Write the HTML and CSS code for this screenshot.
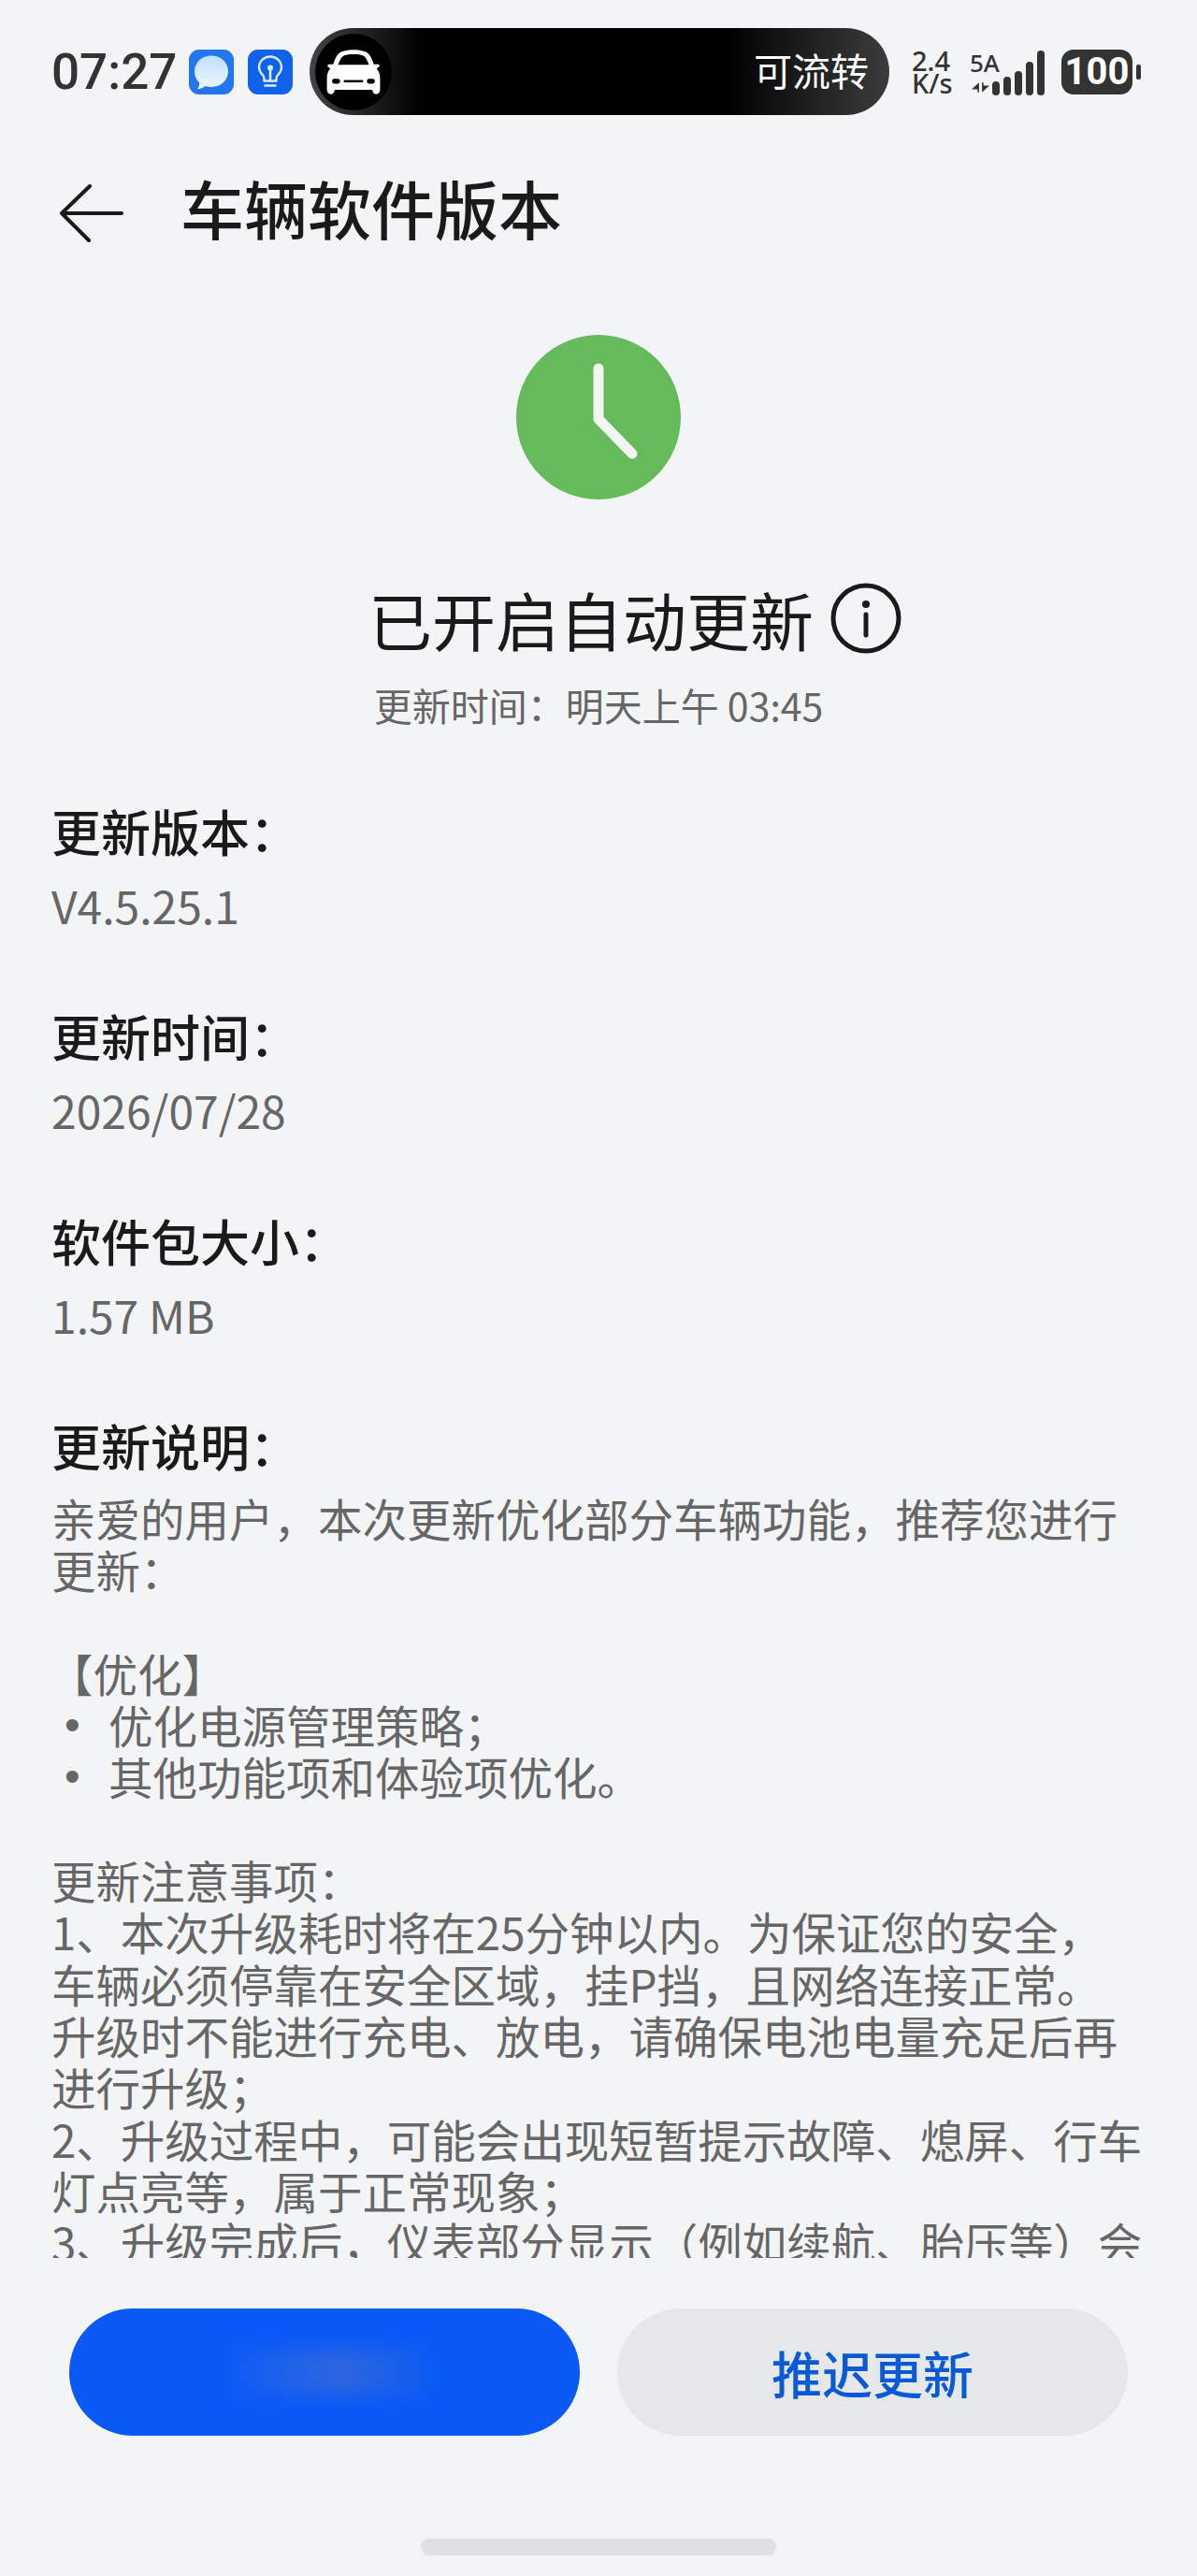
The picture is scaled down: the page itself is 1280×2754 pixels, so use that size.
FILE: index.html
```html
<!DOCTYPE html>
<html lang="zh-CN">
<head>
    <meta charset="UTF-8">
    <meta name="viewport" content="width=device-width, initial-scale=1.0">
    <title>车辆软件版本</title>
    <link rel="stylesheet" href="styles.css">
</head>
<body>
    <div class="phone">
        <div class="status-bar">
            <span class="clock-time">07:27</span>
            <svg class="app-icon" viewBox="0 0 48 48">
                <defs>
                    <linearGradient id="bubble" x1="0" y1="0" x2="0" y2="1">
                        <stop offset="0" stop-color="#bfe0fb"/>
                        <stop offset="1" stop-color="#eef7fe"/>
                    </linearGradient>
                </defs>
                <rect width="48" height="48" rx="11" fill="#2276ee"/>
                <path d="M24 6.500c10.200 0 18 7.400 18 16.800s-7.800 16.700-18 16.700c-2.400 0-4.600-.4-6.600-1.100-2.100 1.900-5.200 3.200-8.400 3.300 1.500-1.700 2.300-3.900 2.300-6.500C7.800 32.500 6 28.300 6 23.300 6 13.900 13.800 6.500 24 6.500z" fill="url(#bubble)"/>
            </svg>
            <svg class="app-icon bulb-icon" viewBox="0 0 48 48">
                <rect width="48" height="48" rx="11" fill="#0f62ea"/>
                <path d="M17.500 33.500v-2.800c0-1.500-.8-2.700-1.900-3.900-2.100-2.200-3.600-4.600-3.600-7.800C12 12.400 17.300 7.500 24 7.500s12 4.900 12 11.500c0 3.200-1.500 5.600-3.600 7.800-1.100 1.200-1.900 2.400-1.900 3.900v2.800z" fill="none" stroke="#dbeafe" stroke-width="2.400" stroke-linejoin="round"/>
                <path d="M18.500 38.500h11M24 22v11" fill="none" stroke="#dbeafe" stroke-width="2.600" stroke-linecap="round"/>
                <circle cx="24" cy="19.500" r="3" fill="#dbeafe"/>
            </svg>
            <div class="island">
                <span class="island-car">
                    <svg viewBox="0 0 60 48" class="car-icon">
                        <path d="M14 5.500C17 2.500 23 1 30 1s13 1.500 16 4.500c2 2 3.500 6 5 10.500h4.500c1.200 0 1.800 1.500 1 2.500L54 20.500c2.300 2.500 3.500 6 3.500 10V42c0 3-1.500 5-4 5s-4-2-4-4.500H10.500C10.500 45 9 47 6.500 47s-4-2-4-5V30.500c0-4.500 1.200-8 3.500-10l-2.500-2c-.8-1-.2-2.500 1-2.500H9c1.500-4.500 3-8.500 5-10.500z" fill="#fff"/>
                        <path d="M14 16.500c1.500-4 3-7 4.500-8.500C21 6 25 5.500 30 5.500S39 6 41.500 8c1.500 1.500 3 4.500 4.500 8.500z" fill="#000"/>
                        <path d="M20 33.500h20" stroke="#000" stroke-width="2.400"/>
                        <rect x="8" y="31" width="8" height="5" rx="2" fill="#000"/>
                        <rect x="44" y="31" width="8" height="5" rx="2" fill="#000"/>
                    </svg>
                </span>
                <span class="island-label">可流转</span>
            </div>
            <div class="net-speed"><span>2.4</span><span>K/s</span></div>
            <div class="signal-wrap">
                <span class="signal-type">5A</span>
                <svg class="signal-arrows" viewBox="0 0 18 10">
                    <path d="M7.500 0v10H6V7H0zM10.500 10V0H12v3h6z" fill="#333"/>
                </svg>
            </div>
            <div class="signal-bars">
                <i class="bar-1"></i><i class="bar-2"></i><i class="bar-3"></i><i class="bar-4"></i><i class="bar-5"></i>
            </div>
            <div class="battery"><span class="battery-level">100</span><i class="battery-tip"></i></div>
        </div>

        <header class="title-bar">
            <svg class="back-arrow" viewBox="0 0 70 62">
                <path d="M3 31h64M33 2L3 31l29 29" fill="none" stroke="#1a1a1a" stroke-width="4" stroke-linecap="round" stroke-linejoin="round"/>
            </svg>
            <h1>车辆软件版本</h1>
        </header>

        <div class="update-state">
            <svg class="state-icon" viewBox="0 0 176 176">
                <circle cx="88" cy="88" r="88" fill="#65bb5c"/>
                <path d="M88 36v54l36 37" fill="none" stroke="#f3f6f3" stroke-width="11" stroke-linecap="round" stroke-linejoin="round"/>
            </svg>
            <div class="state-title">
                <span>已开启自动更新</span>
                <svg class="info-icon" viewBox="0 0 76 76">
                    <circle cx="38" cy="38" r="35" fill="none" stroke="#1a1a1a" stroke-width="5"/>
                    <circle cx="38" cy="23" r="4" fill="#1a1a1a"/>
                    <path d="M38 34v22" stroke="#1a1a1a" stroke-width="5" stroke-linecap="round"/>
                </svg>
            </div>
            <p class="state-time">更新时间：明天上午 03:45</p>
        </div>

        <section class="info-block">
            <h2>更新版本：</h2>
            <p class="info-value">V4.5.25.1</p>
        </section>
        <section class="info-block">
            <h2>更新时间：</h2>
            <p class="info-value">2026/07/28</p>
        </section>
        <section class="info-block">
            <h2>软件包大小：</h2>
            <p class="info-value">1.57 MB</p>
        </section>

        <section class="notes">
            <h2>更新说明：</h2>
            <div class="notes-text">
                <p>亲爱的用户，本次更新优化部分车辆功能，推荐您进行</p>
                <p>更新：</p>
                <p class="blank-line"></p>
                <p class="tag-line">【优化】</p>
                <p class="bullet-line"><span class="bullet">•</span>优化电源管理策略；</p>
                <p class="bullet-line"><span class="bullet">•</span>其他功能项和体验项优化。</p>
                <p class="blank-line"></p>
                <p>更新注意事项：</p>
                <p>1、本次升级耗时将在25分钟以内。为保证您的安全，</p>
                <p>车辆必须停靠在安全区域，挂P挡，且网络连接正常。</p>
                <p>升级时不能进行充电、放电，请确保电池电量充足后再</p>
                <p>进行升级；</p>
                <p>2、升级过程中，可能会出现短暂提示故障、熄屏、行车</p>
                <p>灯点亮等，属于正常现象；</p>
                <p>3、升级完成后，仪表部分显示（例如续航、胎压等）会</p>
            </div>
        </section>

        <div class="actions">
            <button class="btn btn-primary"><span class="blurred-label"></span></button>
            <button class="btn btn-secondary">推迟更新</button>
        </div>
        <div class="home-bar"></div>
    </div>
</body>
</html>
```

FILE: styles.css
```css
* {
    box-sizing: border-box;
}
body {
    margin: 0;
    background-color: #f3f4f6;
    font-family: "Noto Sans CJK SC", "Noto Sans", sans-serif;
}
h1, h2, p {
    margin: 0;
    font-weight: 400;
}
.phone {
    width: 1280px;
    height: 2754px;
    overflow: hidden;
    padding-top: 30px;
}

/* status bar */
.status-bar {
    display: flex;
    align-items: center;
    height: 93px;
    padding-left: 55px;
    color: #333;
}
.clock-time {
    width: 147px;
    font-family: Roboto, sans-serif;
    font-size: 53px;
    font-weight: 500;
}
.app-icon {
    width: 48px;
    height: 48px;
    margin-right: 15px;
}
.bulb-icon {
    margin-right: 18px;
}
.island {
    display: flex;
    align-items: center;
    justify-content: space-between;
    width: 620px;
    height: 93px;
    padding: 0 22px 0 6px;
    border-radius: 47px;
    background: linear-gradient(90deg, #444 0, #000 19%, #000 72%, #3b3d3d 100%);
}
.island-car {
    display: flex;
    align-items: center;
    justify-content: center;
    width: 82px;
    height: 82px;
    border-radius: 50%;
    background-color: #000;
}
.car-icon {
    width: 62px;
    height: 50px;
}
.island-label {
    margin-top: -6px;
    color: #fff;
    font-size: 41px;
}
.net-speed {
    display: flex;
    flex-direction: column;
    width: 62px;
    margin-left: 24px;
    font-family: "Noto Sans", sans-serif;
    font-size: 29px;
    font-weight: 500;
    line-height: 24px;
}
.signal-wrap {
    display: flex;
    flex-direction: column;
    width: 36px;
    font-family: "Noto Sans", sans-serif;
    font-size: 26px;
    font-weight: 500;
    line-height: 24px;
}
.signal-arrows {
    width: 19px;
    height: 11px;
    margin: 9px 0 0 2px;
}
.signal-bars {
    display: flex;
    align-items: flex-end;
    gap: 4px;
    height: 50px;
    margin-left: -12px;
}
.signal-bars i {
    width: 8px;
    background-color: #333;
    border-radius: 4px;
}
.bar-1 { height: 15px; }
.bar-2 { height: 20px; }
.bar-3 { height: 26px; }
.bar-4 { height: 36px; }
.bar-5 { height: 48px; }
.battery {
    display: flex;
    align-items: center;
    margin-left: 18px;
}
.battery-level {
    width: 76px;
    height: 48px;
    border-radius: 13px;
    background-color: #333;
    color: #fff;
    font-family: Roboto, sans-serif;
    font-size: 40px;
    font-weight: 700;
    line-height: 48px;
    text-align: center;
}
.battery-tip {
    width: 5px;
    height: 16px;
    margin-left: 4px;
    border-radius: 2px;
    background-color: #333;
}

/* title */
.title-bar {
    display: flex;
    align-items: center;
    height: 70px;
    margin-top: 64px;
    padding-left: 63px;
}
.back-arrow {
    width: 70px;
    height: 62px;
    margin-top: 12px;
}
.title-bar h1 {
    margin-left: 60px;
    color: #1a1a1a;
    font-size: 68px;
    font-weight: 500;
    line-height: 70px;
}

/* update state */
.update-state {
    display: flex;
    flex-direction: column;
    align-items: center;
    margin-top: 101px;
}
.state-icon {
    width: 176px;
    height: 176px;
}
.state-title {
    display: flex;
    align-items: center;
    height: 90px;
    margin-top: 82px;
    padding-left: 78px;
    color: #1a1a1a;
    font-size: 68px;
}
.info-icon {
    width: 76px;
    height: 76px;
    margin-left: 18px;
}
.state-time {
    margin-top: 18px;
    color: #666;
    font-size: 41px;
    line-height: 58px;
}

/* info */
.info-block {
    margin-top: 68px;
    padding-left: 55px;
}
.info-block + .info-block {
    margin-top: 64px;
}
.info-block h2,
.notes h2 {
    color: #1a1a1a;
    font-size: 53px;
    font-weight: 500;
    line-height: 76px;
}
.info-value {
    margin-top: 3px;
    color: #666;
    font-size: 48px;
    line-height: 76px;
}
.notes {
    height: 907px;
    margin-top: 64px;
    padding-left: 55px;
    overflow: hidden;
}
.notes-text {
    margin-top: 12px;
    color: #666;
    font-size: 47.500px;
    line-height: 55.300px;
    white-space: nowrap;
}
.blank-line {
    height: 55.300px;
}
.tag-line {
    margin-left: -3px;
}
.bullet-line {
    display: flex;
}
.bullet {
    width: 61px;
    padding-left: 14px;
    font-family: "Liberation Sans", sans-serif;
}

/* buttons */
.actions {
    display: flex;
    gap: 40px;
    margin-top: 54px;
    padding-left: 74px;
}
.btn {
    width: 546px;
    height: 136px;
    border: none;
    border-radius: 68px;
    font-family: inherit;
    font-size: 54px;
    font-weight: 500;
}
.btn-primary {
    display: flex;
    align-items: center;
    justify-content: center;
    background-color: #0a59f7;
}
.blurred-label {
    width: 220px;
    height: 50px;
    background: linear-gradient(90deg, #0a59f7, #1f62ea 30%, #2d66df 60%, #0f5bf0);
    filter: blur(9px);
}
.btn-secondary {
    background-color: #e6e7e9;
    color: #0a59d7;
}
.home-bar {
    width: 380px;
    height: 18px;
    margin: 110px auto 0;
    border-radius: 9px;
    background-color: #dfe0e2;
}
```
